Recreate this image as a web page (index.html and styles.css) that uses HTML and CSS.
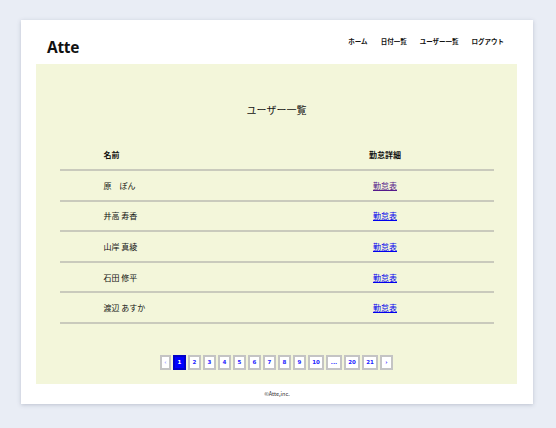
FILE: index.html
```html
<!DOCTYPE html>
<html lang="ja">
<head>
<meta charset="utf-8">
<link rel="stylesheet" href="styles.css">
</head>
<body>
<div class="card">
  <header class="header">
    <div class="logo">Atte</div>
    <nav class="nav">
      <a href="#">ホーム</a>
      <a href="#">日付一覧</a>
      <a href="#">ユーザー一覧</a>
      <a href="#">ログアウト</a>
    </nav>
  </header>
  <main class="main">
    <h2 class="title">ユーザー一覧</h2>
    <table class="users">
      <thead>
        <tr><th class="c-name">名前</th><th class="c-detail">勤怠詳細</th></tr>
      </thead>
      <tbody>
        <tr><td class="c-name">原　ぽん</td><td class="c-detail"><a class="visited" href="#">勤怠表</a></td></tr>
        <tr><td class="c-name">井高 寿香</td><td class="c-detail"><a href="#">勤怠表</a></td></tr>
        <tr><td class="c-name">山岸 真綾</td><td class="c-detail"><a href="#">勤怠表</a></td></tr>
        <tr><td class="c-name">石田 修平</td><td class="c-detail"><a href="#">勤怠表</a></td></tr>
        <tr><td class="c-name">渡辺 あすか</td><td class="c-detail"><a href="#">勤怠表</a></td></tr>
      </tbody>
    </table>
    <div class="pager">
      <span class="pg disabled">‹</span>
      <span class="pg active">1</span>
      <span class="pg">2</span>
      <span class="pg">3</span>
      <span class="pg">4</span>
      <span class="pg">5</span>
      <span class="pg">6</span>
      <span class="pg">7</span>
      <span class="pg">8</span>
      <span class="pg">9</span>
      <span class="pg wide">10</span>
      <span class="pg wide">...</span>
      <span class="pg wide">20</span>
      <span class="pg wide">21</span>
      <span class="pg">›</span>
    </div>
  </main>
  <footer class="footer">©Atte,inc.</footer>
</div>
</body>
</html>
```

FILE: styles.css
```css
html, body {
  margin: 0;
  padding: 0;
}
body {
  background: #e9edf5;
  font-family: "Noto Sans CJK JP", "Noto Sans", sans-serif;
  color: #111;
  padding: 20px 23px 24px 21px;
}
.card {
  background: #fff;
  width: 512px;
  height: 384px;
  box-shadow: 0 1px 4px rgba(60, 70, 100, 0.25);
  display: flex;
  flex-direction: column;
}
.header {
  height: 44px;
  display: flex;
  align-items: center;
  justify-content: space-between;
  padding: 0 29px 0 26px;
}
.logo {
  font-family: "Open Sans", "Noto Sans", sans-serif;
  font-weight: 700;
  font-size: 15.5px;
  letter-spacing: -0.3px;
  margin-top: 10px;
}
.nav {
  display: flex;
  gap: 13px;
  margin-top: -2px;
}
.nav a {
  font-size: 6.5px;
  font-weight: 700;
  color: #111;
  text-decoration: none;
}
.main {
  background: #f3f6da;
  margin: 0 16px 0 15px;
  height: 320px;
  display: flex;
  flex-direction: column;
  align-items: center;
}
.title {
  margin: 39px 0 0;
  font-size: 10px;
  font-weight: 400;
  line-height: 14px;
}
.users {
  margin-top: 22px;
  width: 434px;
  border-collapse: collapse;
  font-size: 8px;
}
.users th,
.users td {
  border-bottom: 2px solid #c9cabc;
  padding: 0;
  height: 28.6px;
}
.users th {
  font-weight: 700;
  height: 30px;
}
.c-name {
  width: 173px;
  text-align: left;
  padding-left: 44px !important;
}
.c-detail {
  width: 217px;
  text-align: center;
}
.users a {
  color: #0000ee;
  text-decoration: underline;
}
.users a.visited {
  color: #551a8b;
}
.pager {
  margin-top: 31px;
  display: flex;
  gap: 2px;
}
.pg {
  box-sizing: border-box;
  height: 15px;
  min-width: 13px;
  padding: 0 2px;
  border: 2px solid #c4c4c4;
  background: #fff;
  color: #2222ff;
  font-size: 5.5px;
  font-weight: 700;
  display: flex;
  align-items: center;
  justify-content: center;
  font-family: "DejaVu Sans", sans-serif;
}
.pg.wide {
  min-width: 16px;
}
.pg.disabled {
  color: #9a9aff;
  min-width: 11px;
}
.pg.active {
  background: #0000ff;
  border-color: #0000c8;
  color: #fff;
}
.footer {
  flex: 1;
  display: flex;
  align-items: center;
  justify-content: center;
  font-size: 5.5px;
  color: #333;
}
```
